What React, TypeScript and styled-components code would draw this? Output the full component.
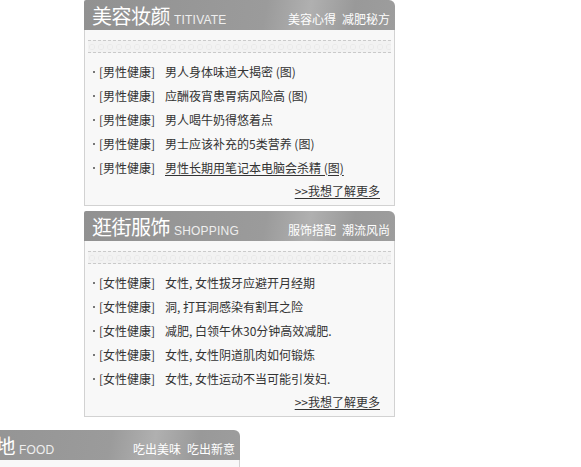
import React from "react";
import styled, { createGlobalStyle } from "styled-components";

const Global = createGlobalStyle`
  html, body { margin: 0; padding: 0; background: #fff; overflow: hidden; }
  body { font-family: "Noto Sans CJK SC", "Liberation Sans", sans-serif; }
`;

const Page = styled.div`
  display: flex;
  flex-direction: column;
  width: 581px;
  height: 467px;
  overflow: hidden;
`;

const Box = styled.section<{ $left: number; $gap: number }>`
  width: 311px;
  margin-left: ${(p) => p.$left}px;
  margin-bottom: ${(p) => p.$gap}px;
  flex-shrink: 0;
`;

const Header = styled.div`
  height: 30px;
  box-sizing: border-box;
  display: flex;
  align-items: flex-end;
  justify-content: space-between;
  padding: 0 5px 3px 8px;
  border-radius: 2px 6px 0 0;
  background: linear-gradient(100deg, #919191 0%, #9b9b9b 58%, #b0b0b0 72%, #999 86%, #9d9d9d 100%);
  color: #fff;
`;

const TitleWrap = styled.div`
  display: flex;
  align-items: baseline;
  gap: 4px;
`;

const Title = styled.span`
  font-size: 20px;
  line-height: 23px;
  color: #fff;
  letter-spacing: -0.5px;
`;

const Sub = styled.span`
  font-family: "Liberation Sans", Arial, sans-serif;
  font-size: 12px;
  color: #eee;
  letter-spacing: 0.2px;
`;

const Links = styled.div`
  display: flex;
  gap: 6px;
  font-size: 12px;
  line-height: 16px;
  color: #fff;
`;

const Body = styled.div`
  height: 176px;
  box-sizing: border-box;
  border: 1px solid #d2d2d2;
  border-top: none;
  background: #f8f8f8;
  padding: 10px 3px 0 3px;
  display: flex;
  flex-direction: column;
`;

const Band = styled.div`
  height: 13px;
  box-sizing: border-box;
  border-top: 1px dashed #cacaca;
  border-bottom: 1px dashed #cacaca;
  background:
    radial-gradient(circle at 4px 6px, transparent 2px, #e9e9e9 2.5px, transparent 3.5px) 0 0 / 9px 12px,
    #f2f2f2;
  margin-bottom: 6px;
`;

const List = styled.ul`
  list-style: none;
  margin: 0;
  padding: 0 0 0 5px;
  display: flex;
  flex-direction: column;
`;

const Item = styled.li`
  height: 24px;
  display: flex;
  align-items: center;
  font-size: 12px;
  color: #333;
  white-space: nowrap;
  &::before {
    content: "";
    width: 2px;
    height: 2px;
    background: #777;
    margin: 1px 4px 0 0;
    flex-shrink: 0;
  }
`;

const Tag = styled.span`
  display: inline-block;
  width: 66px;
  color: #333;
`;

const Headline = styled.a<{ $hover?: boolean }>`
  color: #333;
  text-decoration: ${(p) => (p.$hover ? "underline" : "none")};
  text-underline-offset: 2px;
`;

const More = styled.a`
  align-self: flex-end;
  margin-right: 11px;
  font-size: 12px;
  line-height: 24px;
  color: #333;
  text-decoration: underline;
  text-underline-offset: 2px;
`;

type Sec = {
  title: string;
  sub: string;
  links: string[];
  tag: string;
  items: string[];
  hover?: number;
  left: number;
  gap: number;
};

const sections: Sec[] = [
  {
    title: "美容妆颜",
    sub: "TITIVATE",
    links: ["美容心得", "减肥秘方"],
    tag: "男性健康",
    items: [
      "男人身体味道大揭密 (图)",
      "应酬夜宵患胃病风险高 (图)",
      "男人喝牛奶得悠着点",
      "男士应该补充的5类营养 (图)",
      "男性长期用笔记本电脑会杀精 (图)",
    ],
    hover: 4,
    left: 84,
    gap: 5,
  },
  {
    title: "逛街服饰",
    sub: "SHOPPING",
    links: ["服饰搭配", "潮流风尚"],
    tag: "女性健康",
    items: [
      "女性, 女性拔牙应避开月经期",
      "洞, 打耳洞感染有割耳之险",
      "减肥, 白领午休30分钟高效减肥.",
      "女性, 女性阴道肌肉如何锻炼",
      "女性, 女性运动不当可能引发妇.",
    ],
    left: 84,
    gap: 13,
  },
  {
    title: "美食天地",
    sub: "FOOD",
    links: ["吃出美味", "吃出新意"],
    tag: "美食健康",
    items: [],
    left: -71,
    gap: 0,
  },
];

export default function App() {
  return (
    <Page>
      <Global />
      {sections.map((s) => (
        <Box key={s.title} $left={s.left} $gap={s.gap}>
          <Header>
            <TitleWrap>
              <Title>{s.title}</Title>
              <Sub>{s.sub}</Sub>
            </TitleWrap>
            <Links>
              {s.links.map((l) => (
                <span key={l}>{l}</span>
              ))}
            </Links>
          </Header>
          <Body>
            <Band />
            <List>
              {s.items.map((it, i) => (
                <Item key={it}>
                  <Tag>[{s.tag}]</Tag>
                  <Headline $hover={s.hover === i}>{it}</Headline>
                </Item>
              ))}
            </List>
            {s.items.length > 0 && <More>&gt;&gt;我想了解更多</More>}
          </Body>
        </Box>
      ))}
    </Page>
  );
}
